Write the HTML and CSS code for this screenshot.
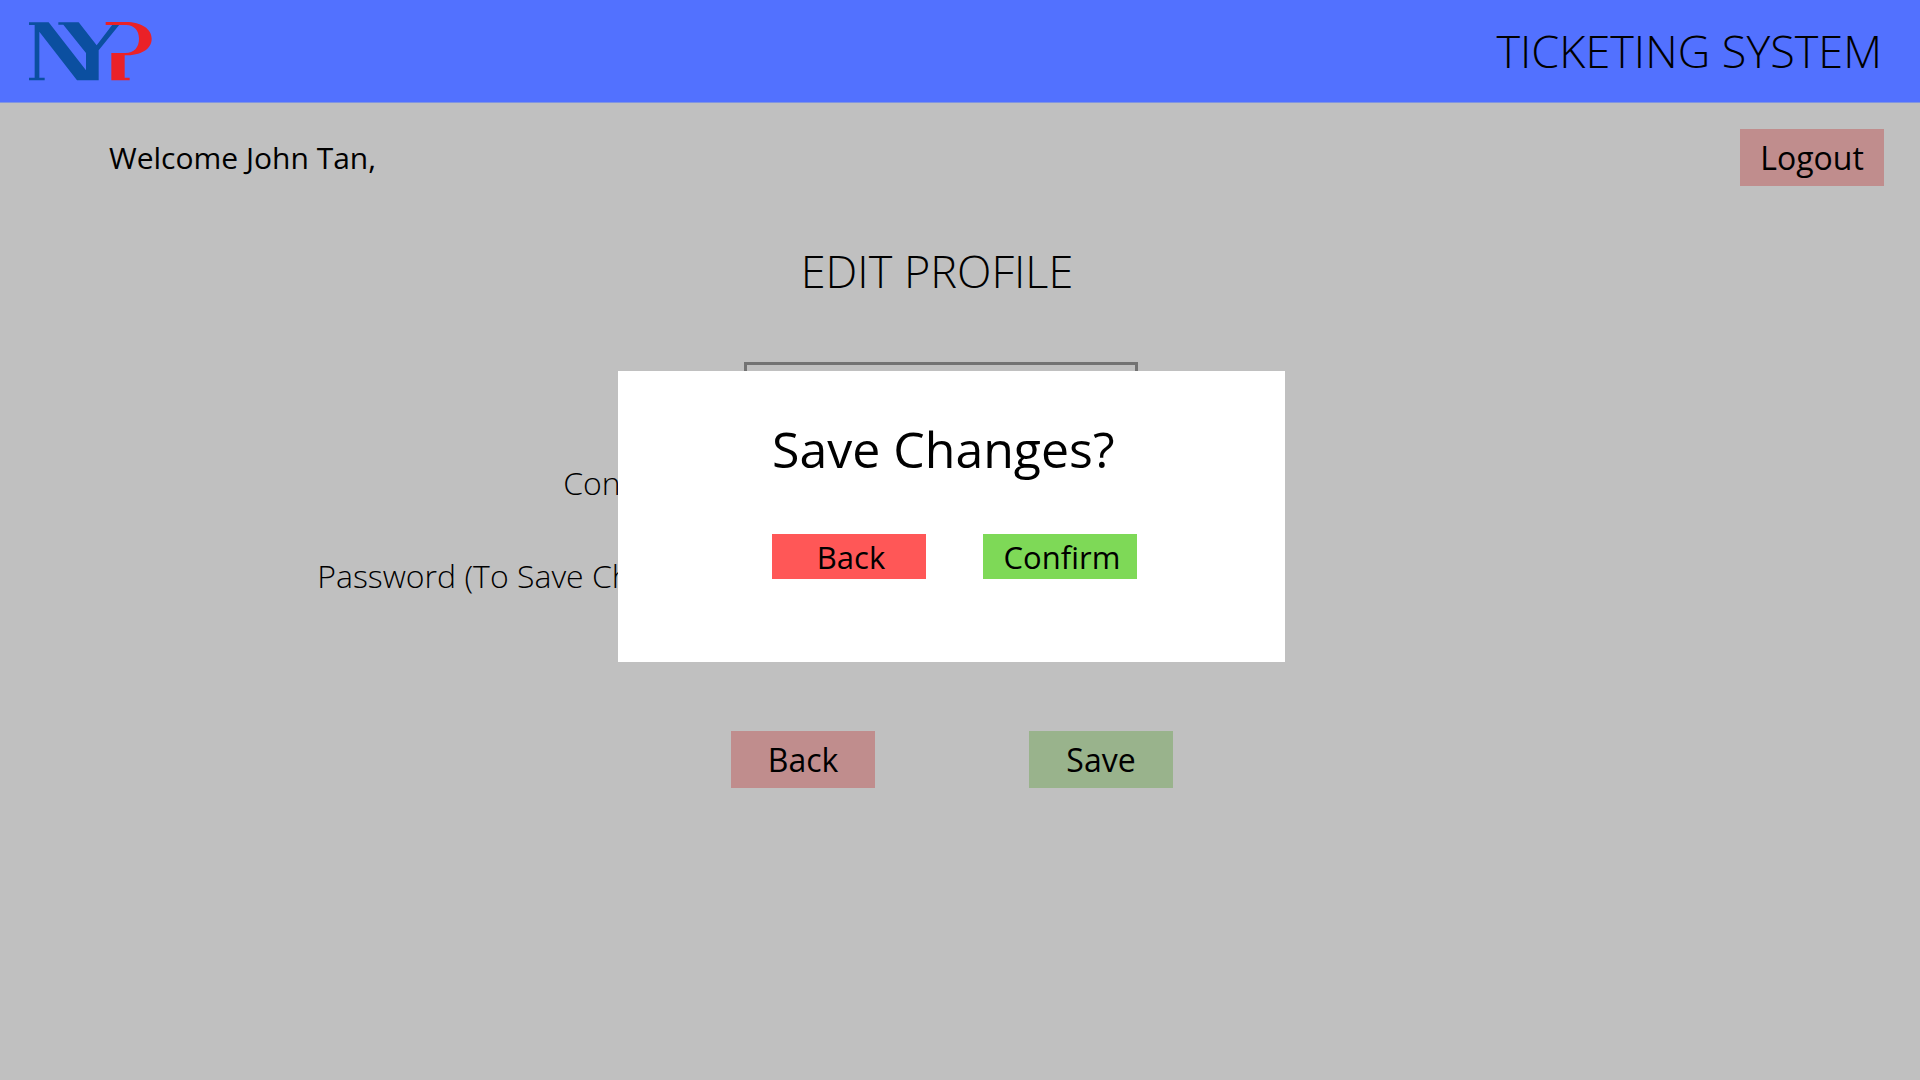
FILE: index.html
```html
<!DOCTYPE html>
<html lang="en">
<head>
  <meta charset="utf-8">
  <meta name="viewport" content="width=device-width, initial-scale=1">
  <title>Ticketing System</title>
  <link rel="stylesheet" href="styles.css">
</head>
<body>
  <header class="topbar">
    <svg class="logo" viewBox="87 65 369 177" role="img" aria-label="NYP">
      <path class="logo-blue" d="M87 66H146L258 210V158L190 73H175V66H236L290 135L337 73H319V66H358V73L296 150V240H231L118 94V232H134V240H87V232H104V74H87Z"/>
      <path class="logo-red" d="M317 65H378C424 65 455 86 455 115C455 147 423 165 374 165V232H389V240H334V158H376C402 158 417 141 417 115C417 90 402 74 379 74H317Z"/>
    </svg>
    <span class="system-name">TICKETING SYSTEM</span>
  </header>

  <main>
    <div class="toolbar">
      <p class="welcome">Welcome John Tan,</p>
      <button class="button button-muted-red" type="button">Logout</button>
    </div>

    <h1 class="page-title">EDIT PROFILE</h1>

    <form>
      <div class="fields">
        <label for="name">Name:</label>
        <input id="name" type="text">
        <label for="contact">Contact No:</label>
        <input id="contact" type="tel">
        <label for="password">Password (To Save Changes):</label>
        <input id="password" type="password">
      </div>
      <div class="actions">
        <button class="button button-muted-red" type="button">Back</button>
        <button class="button button-muted-green" type="submit">Save</button>
      </div>
    </form>
  </main>

  <div class="overlay">
    <section class="dialog" role="dialog" aria-modal="true" aria-labelledby="dialog-title">
      <h2 class="dialog-title" id="dialog-title">Save Changes?</h2>
      <div class="dialog-actions">
        <button class="dialog-button dialog-back" type="button">Back</button>
        <button class="dialog-button dialog-confirm" type="button">Confirm</button>
      </div>
    </section>
  </div>
</body>
</html>
```

FILE: styles.css
```css
* {
  box-sizing: border-box;
}

body {
  margin: 0;
  min-height: 100vh;
  background: #c0c0c0;
  color: #000;
  font-family: "Open Sans", "Noto Sans", sans-serif;
  font-size: 32px;
  line-height: 44px;
}

h1,
h2,
p {
  margin: 0;
  font-weight: 400;
}

button,
input {
  font: inherit;
  color: inherit;
}

button {
  padding: 0;
  border: 0;
  cursor: pointer;
}

.topbar {
  display: flex;
  align-items: center;
  justify-content: space-between;
  height: 103px;
  padding: 0 38px 0 29px;
  border-bottom: 1px solid #8296e0;
  background: #5271ff;
}

.logo {
  width: 123px;
  height: 59px;
}

.logo-blue {
  fill: #0b4fa0;
}

.logo-red {
  fill: #ea2127;
}

.system-name,
.page-title {
  font-size: 45px;
  font-weight: 300;
  line-height: 62px;
}

.toolbar {
  display: flex;
  align-items: center;
  justify-content: space-between;
  padding: 26px 36px 0 109px;
}

.welcome {
  font-size: 30px;
}

.button {
  width: 144px;
  height: 57px;
}

.button-muted-red {
  background: #c08d8d;
}

.button-muted-green {
  background: #99b38c;
}

.page-title {
  margin-top: 54px;
  padding-right: 46px;
  text-align: center;
}

.fields {
  display: grid;
  grid-template-columns: 1fr 394px 1fr;
  gap: 37px 12px;
  align-items: center;
  margin-top: 60px;
  padding-right: 38px;
}

.fields label {
  grid-column: 1;
  text-align: right;
  font-weight: 300;
  white-space: nowrap;
}

.fields input {
  width: 100%;
  height: 56px;
  padding: 0 12px;
  border: 3px solid #737373;
  border-radius: 0;
  background: transparent;
}

.actions {
  display: flex;
  justify-content: center;
  gap: 154px;
  margin-top: 127px;
  padding-right: 16px;
}

.overlay {
  position: absolute;
  inset: 0;
  display: flex;
  align-items: flex-start;
  justify-content: center;
  padding: 371px 17px 0 0;
}

.dialog {
  width: 667px;
  padding: 44px 0 83px 154px;
  background: #fff;
}

.dialog-title {
  font-size: 50px;
  line-height: 68px;
}

.dialog-actions {
  display: flex;
  gap: 57px;
  margin-top: 51px;
}

.dialog-button {
  width: 154px;
  height: 45px;
  padding-left: 4px;
  font-size: 31px;
}

.dialog-back {
  background: #ff5757;
}

.dialog-confirm {
  background: #7ed957;
}
```
